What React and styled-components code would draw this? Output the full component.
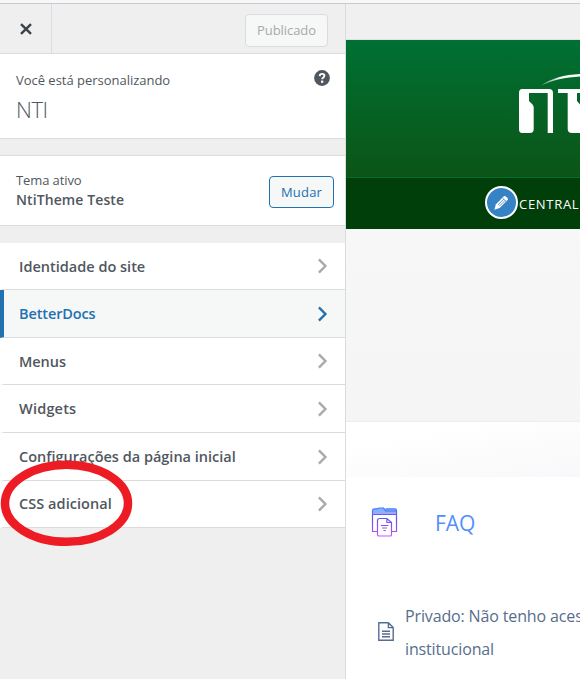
import React from "react";
import styled, { createGlobalStyle } from "styled-components";

const Global = createGlobalStyle`
  *, *::before, *::after { box-sizing: border-box; }
  body { margin: 0; overflow: hidden; }
  p, h1, h2, h3 { margin: 0; font-weight: 400; }
  button { font: inherit; margin: 0; padding: 0; }
  svg { display: block; flex: none; }
`;

const Page = styled.div`
  position: relative;
  width: 580px;
  height: 679px;
  display: flex;
  flex-direction: column;
  overflow: hidden;
  background: #efefef;
  color: #50575e;
  font-family: "Open Sans", "Noto Sans", sans-serif;
  font-size: 13px;
`;

const BrowserEdge = styled.div`
  flex: none;
  height: 4px;
  background: #f7f7fa;
  border-bottom: 1px solid #c9cacf;
`;

const Workspace = styled.div`
  flex: 1;
  min-height: 0;
  display: flex;
`;

const Sidebar = styled.aside`
  flex: none;
  width: 346px;
  background: #efefef;
  border-right: 1px solid #dcdcde;
`;

const Toolbar = styled.header`
  height: 50px;
  display: flex;
  justify-content: space-between;
  align-items: center;
  padding-right: 17px;
  border-bottom: 1px solid #dcdcde;
`;

const CloseButton = styled.button`
  width: 52px;
  height: 49px;
  display: flex;
  align-items: center;
  justify-content: center;
  border: 0;
  border-right: 1px solid #dcdcde;
  background: transparent;
  color: #3c434a;
`;

const ActionButton = styled.button`
  width: ${(p) => p.$width}px;
  height: ${(p) => p.$height}px;
  margin-top: ${(p) => p.$top || 0}px;
  display: flex;
  align-items: center;
  justify-content: center;
  border: 1px solid ${(p) => (p.$muted ? "#dcdcde" : "#2271b1")};
  border-radius: 4px;
  background: #f6f7f7;
  color: ${(p) => (p.$muted ? "#a7aaad" : "#2271b1")};
  letter-spacing: ${(p) => p.$tracking}px;
`;

const Panel = styled.section`
  display: flex;
  justify-content: space-between;
  height: ${(p) => p.$height}px;
  margin-bottom: ${(p) => p.$gap}px;
  padding: ${(p) => p.$padding};
  background: #fff;
  border-top: ${(p) => (p.$topLine ? "1px solid #dcdcde" : "0")};
  border-bottom: 1px solid #dcdcde;
`;

const Caption = styled.p`
  line-height: 20px;
  letter-spacing: ${(p) => p.$tracking}px;
  white-space: nowrap;
`;

const SiteName = styled.h1`
  margin-top: 4px;
  font-size: 22px;
  font-weight: 300;
  line-height: 30px;
  letter-spacing: -0.4px;
`;

const ThemeName = styled.h2`
  font-size: 14px;
  font-weight: 600;
  line-height: 19px;
  letter-spacing: 0.1px;
`;

const MenuList = styled.nav`
  display: flex;
  flex-direction: column;
`;

const MenuRow = styled.a`
  height: ${(p) => p.$height}px;
  display: flex;
  align-items: center;
  justify-content: space-between;
  padding: 0 17px 0 15px;
  border-left: 4px solid ${(p) => (p.$active ? "#2271b1" : "#fff")};
  border-bottom: 1px solid #dcdcde;
  background: ${(p) => (p.$active ? "#f6f7f7" : "#fff")};
  color: ${(p) => (p.$active ? "#2271b1" : "#50575e")};
  font-size: 14.5px;
  font-weight: 600;
  line-height: 20px;
  letter-spacing: ${(p) => p.$tracking}px;
  white-space: nowrap;

  svg { color: ${(p) => (p.$active ? "#2271b1" : "#a7aaad")}; }
`;

const MenuLabel = styled.span`
  padding-top: ${(p) => p.$drop || 0}px;
`;

const Preview = styled.main`
  flex: 1;
  min-width: 0;
  overflow: hidden;
  background: #fff;
`;

const PreviewGap = styled.div`
  height: 36px;
  background: #f0f0f1;
  border-bottom: 1px solid #dfe0e0;
`;

const Masthead = styled.div`
  height: 138px;
  padding: 30px 0 0 172px;
  border-bottom: 1px solid #006e33;
  background: linear-gradient(#007034, #0b5516);
`;

const SiteNav = styled.div`
  height: 51px;
  display: flex;
  align-items: center;
  padding-left: 139px;
  background: #003e0a;
`;

const EditBadge = styled.span`
  width: 33px;
  height: 33px;
  display: flex;
  align-items: center;
  justify-content: center;
  flex: none;
  margin-top: -2px;
  border: 2px solid #fff;
  border-radius: 50%;
  background: #3582c4;
`;

const NavLabel = styled.span`
  margin: 1px 0 0 1px;
  color: #fff;
  font-size: 13px;
  letter-spacing: 0.7px;
  white-space: nowrap;
`;

const Banner = styled.div`
  height: 193px;
  background: linear-gradient(#f7f7f7, #f5f5f5);
  border-bottom: 1px solid #ededed;
`;

const SoftBand = styled.div`
  height: 55px;
  background: linear-gradient(170deg, #fff 25%, #f8f8fa);
`;

const Docs = styled.section`
  padding: 30px 0 0 25px;
`;

const DocsHeading = styled.div`
  display: flex;
  align-items: flex-start;
  gap: 37px;
  height: 93px;
`;

const DocsTitle = styled.h2`
  color: #528ffe;
  font-size: 21px;
  line-height: 32px;
  letter-spacing: -0.1px;
`;

const Article = styled.a`
  display: flex;
  align-items: center;
  gap: 11px;
  margin-left: 7px;
  color: #566e8b;

  svg { margin-bottom: 3px; }
`;

const ArticleText = styled.span`
  font-size: 16px;
  line-height: 33px;
  letter-spacing: -0.14px;
  white-space: nowrap;
`;

const Line = styled.span`
  display: block;
`;

const Annotation = styled.svg`
  position: absolute;
  left: 0;
  top: 455px;
  pointer-events: none;
`;

const CloseIcon = () => (
  <svg width="12" height="12" viewBox="0 0 12 12">
    <path d="M1 1.2 11 10.8M11 1.2 1 10.8" stroke="currentColor" strokeWidth="2.5" />
  </svg>
);

const HelpIcon = () => (
  <svg width="16" height="16" viewBox="0 0 16 16">
    <circle cx="8" cy="8" r="7.9" fill="#50575e" />
    <path d="M5.7 6.1C5.8 4.5 6.8 3.9 8.1 3.9c1.4 0 2.3.8 2.3 1.9 0 1.7-2.2 1.7-2.2 3.5" fill="none" stroke="#fff" strokeWidth="1.9" />
    <rect x="7" y="10.6" width="2.3" height="2.2" fill="#fff" />
  </svg>
);

const Chevron = () => (
  <svg width="11" height="16" viewBox="0 0 11 16">
    <path d="M1.9 1.4 8.4 8l-6.5 6.6" fill="none" stroke="currentColor" strokeWidth="2.4" />
  </svg>
);

const Logo = () => (
  <svg width="140" height="66" viewBox="0 0 140 66">
    <defs>
      <linearGradient id="arc">
        <stop offset="0" stopColor="#fff" stopOpacity="0.35" />
        <stop offset="0.28" stopColor="#fff" />
      </linearGradient>
    </defs>
    <path d="M23 15.6C41 3 69 1 100 8 69 4.5 43 5.5 23 15.6Z" fill="url(#arc)" />
    <path
      d="M4 19H31Q35 19 35 23V63H29.7V23H11V31Q15.7 35 15.7 37V59Q15.7 63 12 63H4Q1 63 1 59V23Q1 19 4 19Z"
      fill="#fff"
    />
    <path d="M40 19H88V23H59V31Q63 35 63 37V63H54Q49.7 63 49.7 59V23H40Z" fill="#fff" />
  </svg>
);

const PencilIcon = () => (
  <svg width="17" height="17" viewBox="0 0 18 18">
    <path d="m1.4 16.6 1.7-5.7L11.8 2.2c1.1-1.1 4.9 2.7 3.9 3.9L7 14.7Z" fill="#fff" />
    <path d="m10.2 4.3 3.7 3.6M5.3 11.6l6.1-6.2M6.8 12.9l6.1-6.1" fill="none" stroke="#3582c4" strokeWidth=".85" />
  </svg>
);

const FolderIcon = () => (
  <svg width="27" height="30" viewBox="-0.4 -0.4 27 30">
    <defs>
      <linearGradient id="folder" x1="0" y1="0" x2="0" y2="30" gradientUnits="userSpaceOnUse">
        <stop offset="0" stopColor="#3f82f8" />
        <stop offset="0.4" stopColor="#6650ee" />
        <stop offset="0.8" stopColor="#a452f5" />
        <stop offset="1" stopColor="#cf5af5" />
      </linearGradient>
    </defs>
    <path d="M1.5 7V3Q1.5 1.5 3 1.5H6Q7 .5 9 .5H12Q13.5 .5 14.5 1.5H24Q25.5 1.5 25.5 3V7Z" fill="#86b1ff" />
    <path d="M1.5 5H25.5V7H1.5Z" fill="#a8a4f8" />
    <g fill="none" stroke="url(#folder)" strokeWidth="1.2">
      <path d="M6.5 24.1H1.1V3Q1.1 1.5 3 1.5H5.5L7.5 .6H12L14.5 3.6H25.1M14.5 1.5H23.5Q25.1 1.5 25.1 3V24.1H20.1M1.1 7.1H25.1" />
      <path d="M8.5 11.1H15.5L20.1 15.1V27Q20.1 28.6 18.9 28.6H7.7Q6.1 28.6 6.1 27V13Q6.1 11.1 8.5 11.1ZM15.5 11.1V15.1H20.1" />
      <path d="M9.5 18.1H17M10.7 20.6H15.7M12 23.1H14.5" />
    </g>
  </svg>
);

const DocumentIcon = () => (
  <svg width="16" height="19" viewBox="0 0 16 19">
    <g fill="none" stroke="currentColor" strokeWidth="1.4">
      <path d="M.8.8H10.4L15.2 5.6V18.2H.8ZM10.4.8V5.6H15.2M4 9.2H12M4 12H12M4 14.8H12" />
    </g>
  </svg>
);

const menu = [
  { label: "Identidade do site", height: 47, tracking: 0, drop: 1 },
  { label: "BetterDocs", height: 48, tracking: -0.12, active: true },
  { label: "Menus", height: 47, tracking: -0.05, drop: 2 },
  { label: "Widgets", height: 48, tracking: 0.2 },
  { label: "Configurações da página inicial", height: 48, tracking: 0 },
  { label: "CSS adicional", height: 47, tracking: 0.05 },
];

export default function App() {
  return (
    <Page>
      <Global />
      <BrowserEdge />
      <Workspace>
        <Sidebar>
          <Toolbar>
            <CloseButton aria-label="Fechar"><CloseIcon /></CloseButton>
            <ActionButton $width={83} $height={33} $top={3} $tracking={-0.05} $muted disabled>Publicado</ActionButton>
          </Toolbar>
          <Panel $height={85} $gap={16} $padding="16px 15px 0 16px">
            <div>
              <Caption $tracking={-0.02}>Você está personalizando</Caption>
              <SiteName>NTI</SiteName>
            </div>
            <HelpIcon />
          </Panel>
          <Panel $height={71} $gap={17} $padding="14px 11px 0 16px" $topLine>
            <div>
              <Caption $tracking={-0.1}>Tema ativo</Caption>
              <ThemeName>NtiTheme Teste</ThemeName>
            </div>
            <ActionButton $width={65} $height={32} $top={6} $tracking={0.2}>Mudar</ActionButton>
          </Panel>
          <MenuList>
            {menu.map((item) => (
              <MenuRow
                key={item.label}
                $height={item.height}
                $tracking={item.tracking}
                $active={item.active}
              >
                <MenuLabel $drop={item.drop}>{item.label}</MenuLabel>
                <Chevron />
              </MenuRow>
            ))}
          </MenuList>
        </Sidebar>
        <Preview>
          <PreviewGap />
          <Masthead><Logo /></Masthead>
          <SiteNav>
            <EditBadge><PencilIcon /></EditBadge>
            <NavLabel>CENTRAL</NavLabel>
          </SiteNav>
          <Banner />
          <SoftBand />
          <Docs>
            <DocsHeading>
              <FolderIcon />
              <DocsTitle>FAQ</DocsTitle>
            </DocsHeading>
            <Article>
              <DocumentIcon />
              <ArticleText>
                <Line>Privado: Não tenho aces</Line>
                <Line>institucional</Line>
              </ArticleText>
            </Article>
          </Docs>
        </Preview>
      </Workspace>
      <Annotation width="136" height="96" viewBox="0 0 136 96">
        <ellipse cx="66.5" cy="48.3" rx="61.5" ry="38.5" fill="none" stroke="#ed1c24" strokeWidth="8.5" />
      </Annotation>
    </Page>
  );
}
